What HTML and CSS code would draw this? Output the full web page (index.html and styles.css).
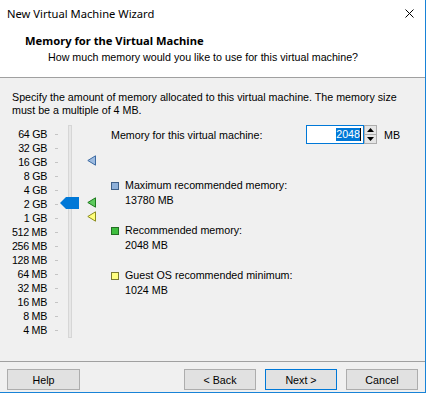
FILE: index.html
```html
<!DOCTYPE html>
<html lang="en">
<head>
  <meta charset="UTF-8">
  <title>New Virtual Machine Wizard</title>
  <link rel="stylesheet" href="styles.css">
</head>
<body>
  <div class="window">
    <div class="titlebar">
      <span class="title">New Virtual Machine Wizard</span>
      <svg class="close" width="9" height="9" viewBox="0 0 9 9">
        <path d="M0.5 0.5 L8.5 8.5 M8.5 0.5 L0.5 8.5" stroke="#000" stroke-width="1" fill="none"/>
      </svg>
    </div>

    <div class="header">
      <div class="header-title">Memory for the Virtual Machine</div>
      <div class="header-sub">How much memory would you like to use for this virtual machine?</div>
    </div>

    <div class="content">
      <p class="desc">Specify the amount of memory allocated to this virtual machine. The memory size<br>must be a multiple of 4 MB.</p>

      <div class="main">
        <div class="slider">
          <ul class="scale">
            <li><span class="lbl">64 GB</span><span class="tick"></span></li>
            <li><span class="lbl">32 GB</span><span class="tick"></span></li>
            <li><span class="lbl">16 GB</span><span class="tick"></span></li>
            <li><span class="lbl">8 GB</span><span class="tick"></span></li>
            <li><span class="lbl">4 GB</span><span class="tick"></span></li>
            <li><span class="lbl">2 GB</span><span class="tick"></span></li>
            <li><span class="lbl">1 GB</span><span class="tick"></span></li>
            <li><span class="lbl">512 MB</span><span class="tick"></span></li>
            <li><span class="lbl">256 MB</span><span class="tick"></span></li>
            <li><span class="lbl">128 MB</span><span class="tick"></span></li>
            <li><span class="lbl">64 MB</span><span class="tick"></span></li>
            <li><span class="lbl">32 MB</span><span class="tick"></span></li>
            <li><span class="lbl">16 MB</span><span class="tick"></span></li>
            <li><span class="lbl">8 MB</span><span class="tick"></span></li>
            <li><span class="lbl">4 MB</span><span class="tick"></span></li>
          </ul>
          <div class="track"></div>

          <svg class="thumb" style="top: 72px" width="19" height="12" viewBox="0 0 19 12">
            <path d="M0 6 L6 0 L19 0 L19 12 L6 12 Z" fill="#0078d7"/>
          </svg>
          <svg class="marker" style="top: 30px" width="9" height="11" viewBox="0 0 9 11">
            <path d="M0.8 5.5 L8.5 0.8 L8.5 10.2 Z" fill="#9dbbe0" stroke="#3d6ba3" stroke-width="1"/>
          </svg>
          <svg class="marker" style="top: 72px" width="9" height="11" viewBox="0 0 9 11">
            <path d="M0.8 5.5 L8.5 0.8 L8.5 10.2 Z" fill="#5ecb5e" stroke="#1f7a1f" stroke-width="1"/>
          </svg>
          <svg class="marker" style="top: 86px" width="9" height="11" viewBox="0 0 9 11">
            <path d="M0.8 5.5 L8.5 0.8 L8.5 10.2 Z" fill="#ffff7a" stroke="#8c8c1e" stroke-width="1"/>
          </svg>
        </div>

        <div class="panel">
          <div class="mem-row">
            <span class="mem-label">Memory for this virtual machine:</span>
            <div class="spin-input">
              <div class="input"><span class="sel">2048</span><span class="caret"></span></div>
              <div class="spinner">
                <span class="spin-btn">
                  <svg width="7" height="4" viewBox="0 0 7 4"><path d="M0 4 L3.5 0 L7 4 Z" fill="#000"/></svg>
                </span>
                <span class="spin-btn">
                  <svg width="7" height="4" viewBox="0 0 7 4"><path d="M0 0 L3.5 4 L7 0 Z" fill="#000"/></svg>
                </span>
              </div>
            </div>
            <span class="unit">MB</span>
          </div>

          <div class="legend">
            <div class="legend-item">
              <div class="legend-name"><span class="swatch max"></span>Maximum recommended memory:</div>
              <div class="legend-value">13780 MB</div>
            </div>
            <div class="legend-item">
              <div class="legend-name"><span class="swatch rec"></span>Recommended memory:</div>
              <div class="legend-value">2048 MB</div>
            </div>
            <div class="legend-item">
              <div class="legend-name"><span class="swatch min"></span>Guest OS recommended minimum:</div>
              <div class="legend-value">1024 MB</div>
            </div>
          </div>
        </div>
      </div>
    </div>

    <div class="footer">
      <button class="btn help">Help</button>
      <div class="nav-buttons">
        <button class="btn">&lt; Back</button>
        <button class="btn default">Next &gt;</button>
        <button class="btn">Cancel</button>
      </div>
    </div>
  </div>
</body>
</html>
```

FILE: styles.css
```css
body {
  margin: 0;
  background: #fff;
  font-family: 'Liberation Sans', Arial, sans-serif;
  font-size: 10.7px;
  color: #000;
}
.window {
  width: 425px;
  height: 392px;
  border-right: 1px solid #1883d7;
  border-bottom: 1px solid #1883d7;
  background: #f0f0f0;
  display: flex;
  flex-direction: column;
}
.titlebar {
  height: 27px;
  background: #fff;
  display: flex;
  align-items: center;
  justify-content: space-between;
  padding: 0 11px 3px 7px;
}
.title {
  font-family: 'Noto Sans', sans-serif;
  font-size: 11.2px;
}
.close {
  display: block;
}
.header {
  background: #fff;
  height: 48px;
  padding-left: 25px;
  border-bottom: 1px solid #a0a0a0;
  box-sizing: border-box;
  padding-top: 3px;
}
.header-title {
  font-weight: bold;
  line-height: 16px;
  font-size: 11.2px;
  font-family: 'Noto Sans', sans-serif;
}
.header-sub {
  padding-left: 23px;
  line-height: 17px;
}
.content {
  flex: 1;
  padding: 0 12px;
}
.desc {
  margin: 13px 0 0;
  line-height: 13px;
}
.main {
  display: flex;
  margin: 8px 0 0 -12px;
}
.slider {
  position: relative;
  width: 111px;
  height: 211px;
  display: flex;
}
.scale {
  list-style: none;
  margin: 0;
  padding: 2px 0 0;
}
.scale li {
  height: 14px;
  display: flex;
  align-items: center;
}
.lbl {
  width: 47px;
  text-align: right;
  white-space: nowrap;
  letter-spacing: -0.3px;
}
.tick {
  width: 3px;
  height: 1px;
  background: #c4c4c4;
  margin-left: 8px;
}
.track {
  width: 2px;
  height: 100%;
  margin-left: 10px;
  background: #e7e7e7;
  border: 1px solid #d6d6d6;
  box-sizing: content-box;
}
.thumb {
  position: absolute;
  left: 60px;
}
.marker {
  position: absolute;
  left: 87px;
}
.panel {
  flex: 1;
}
.mem-row {
  display: flex;
  align-items: center;
  height: 19px;
}
.mem-label {
  width: 195px;
}
.spin-input {
  display: flex;
}
.input {
  width: 54px;
  height: 17px;
  border: 1px solid #0078d7;
  background: #fff;
  display: flex;
  align-items: center;
  justify-content: flex-end;
  padding-right: 2px;
  box-sizing: content-box;
}
.sel {
  background: #0078d7;
  color: #fff;
  line-height: 13px;
}
.caret {
  width: 1px;
  height: 13px;
  background: #000;
}
.spinner {
  display: flex;
  flex-direction: column;
  width: 13px;
  height: 19px;
}
.spin-btn {
  flex: 1;
  display: flex;
  align-items: center;
  justify-content: center;
  background: #e5e5e5;
  border: 1px solid #adadad;
  margin-top: -1px;
}
.spin-btn:first-child {
  margin-top: 0;
}
.unit {
  margin-left: 7px;
}
.legend {
  margin-top: 34px;
  display: flex;
  flex-direction: column;
  gap: 15px;
}
.legend-item {
  line-height: 15px;
}
.legend-name {
  display: flex;
  align-items: center;
}
.legend-value {
  padding-left: 14px;
}
.swatch {
  width: 6px;
  height: 6px;
  margin-right: 6px;
  border: 1px solid #555;
}
.swatch.max {
  background: #8eb0d9;
  border-color: #3e5f88;
}
.swatch.rec {
  background: #3fbe3f;
  border-color: #236f23;
}
.swatch.min {
  background: #ffff80;
  border-color: #7a7a30;
}
.footer {
  height: 31px;
  box-sizing: border-box;
  border-top: 1px solid #a0a0a0;
  display: flex;
  align-items: flex-start;
  justify-content: space-between;
  padding: 7px 7px 0;
}
.nav-buttons {
  display: flex;
  gap: 9px;
}
.btn {
  width: 72px;
  height: 21px;
  padding: 0;
  background: #e1e1e1;
  border: 1px solid #adadad;
  font-family: 'Liberation Sans', Arial, sans-serif;
  font-size: 10.7px;
  color: #000;
}
.btn.help {
  width: 73px;
}
.btn.default {
  border-color: #0078d7;
}
```
